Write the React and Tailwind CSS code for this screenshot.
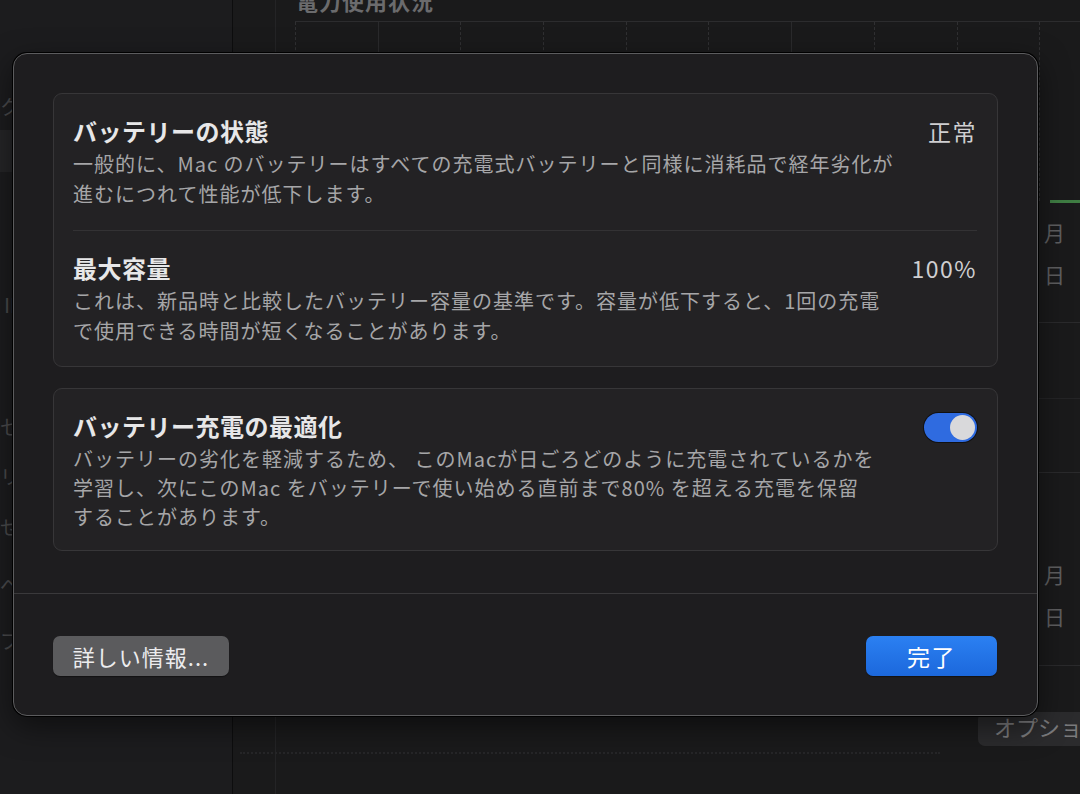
import React from 'react';

const gridCols = [0, 1, 2, 3, 4, 5, 6, 7, 8, 9];

const Toggle = () => (
  <div className="w-[53px] h-[29px] rounded-full bg-[#2f6be0] flex items-center justify-end px-[2px] shadow-[0_0_0_1px_rgba(0,0,0,0.5)]">
    <div className="w-[25px] h-[25px] rounded-full bg-[#d9d9db]"></div>
  </div>
);

const Item = ({ title, value, lines, leading, right }) => (
  <div className="flex justify-between items-start">
    <div>
      <div className="text-[24px] leading-[30px] font-semibold text-[#e7e7e8] tracking-[0.5px]">{title}</div>
      <div className={`mt-[3px] text-[20px] ${leading} text-[#a6a6a8] tracking-[1px]`}>
        {lines.map((l, i) => (
          <div key={i} className="whitespace-nowrap">{l}</div>
        ))}
      </div>
    </div>
    {value && (
      <div className="text-[23px] leading-[30px] text-[#cfcfd1] tracking-[1.5px]">{value}</div>
    )}
    {right}
  </div>
);

const App = () => {
  return (
    <div className="relative w-[1080px] h-[794px] overflow-hidden bg-[#1a1a1b] font-['Noto_Sans_CJK_JP','Noto_Sans',sans-serif] flex">
      {/* Background window: sidebar */}
      <div className="w-[233px] shrink-0 h-full bg-[#1c1c1e] border-r border-[#0d0d0e] flex flex-col text-[#4a4a4c] text-[20px]">
        <div className="mt-[92px]">ク</div>
        <div className="mt-[8px] h-[42px] bg-[#252527]"></div>
        <div className="mt-[118px]">Ⅱ</div>
        <div className="mt-[92px]">セ</div>
        <div className="mt-[20px]">リ</div>
        <div className="mt-[20px]">せ</div>
        <div className="mt-[28px]">ベ</div>
        <div className="mt-[26px]">ブ</div>
      </div>

      {/* Background window: content */}
      <div className="flex-1 min-w-0 h-full flex overflow-hidden">
        <div className="w-[43px] shrink-0 border-r border-[#242426]"></div>
        <div className="flex-1 min-w-0 relative">
          <div className="absolute -top-[16px] left-[20px] text-[22px] font-semibold text-[#6b6b6d] tracking-[1px] whitespace-nowrap">電力使用状況</div>
          <div className="mt-[21px] ml-[19px] h-[180px] border-t border-[#2c2c2e] flex">
            {gridCols.map((c) => (
              <div
                key={c}
                className={`w-[82.7px] shrink-0 border-l ${c % 5 === 1 ? 'border-solid border-[#2a2a2c]' : 'border-dashed border-[#303032]'}`}
              ></div>
            ))}
          </div>
          {/* right edge bits visible beside the dialog */}
          <div className="absolute left-[774px] top-[200px] w-[40px] h-[3px] bg-[#3f7d43]"></div>
          <div className="absolute left-[768px] top-[218px] text-[21px] leading-[28px] text-[#5e5e60] flex flex-col gap-[14px]">
            <div>月</div>
            <div>日</div>
          </div>
          <div className="absolute left-[760px] top-[322px] w-[100px] border-t border-[#2a2a2c]"></div>
          <div className="absolute left-[760px] top-[398px] w-[100px] border-t border-[#242426]"></div>
          <div className="absolute left-[760px] top-[472px] w-[100px] border-t border-[#2a2a2c]"></div>
          <div className="absolute left-[768px] top-[560px] text-[21px] leading-[28px] text-[#5e5e60] flex flex-col gap-[14px]">
            <div>月</div>
            <div>日</div>
          </div>
          <div className="absolute left-[760px] top-[665px] w-[100px] border-t border-[#2a2a2c]"></div>
          <div className="absolute left-[-36px] top-[752px] w-[700px] border-t-2 border-dotted border-[#262628]"></div>
          <div className="absolute left-[702px] top-[712px] w-[140px] h-[34px] rounded-[7px] bg-[#2b2b2d] text-[22px] leading-[28px] pl-[16px] text-[#7a7a7c] whitespace-nowrap">オプション</div>
        </div>
      </div>

      {/* Modal sheet */}
      <div className="absolute left-[13px] top-[53px] w-[1025px] h-[663px] rounded-[14px] bg-[#1e1d1f] border border-[#5c5c5e] shadow-[0_0_0_1px_#000,0_10px_30px_rgba(0,0,0,0.5)] flex flex-col">
        <div className="px-[39px] pt-[39px] flex flex-col gap-[21px]">
          <div className="rounded-[9px] bg-[#232224] border border-[#373638] pl-[19px] pr-[20px] pt-[22px] pb-[20px]">
            <Item
              title="バッテリーの状態"
              value="正常"
              leading="leading-[30px]"
              lines={[
                '一般的に、Mac のバッテリーはすべての充電式バッテリーと同様に消耗品で経年劣化が',
                '進むにつれて性能が低下します。',
              ]}
            />
            <div className="mt-[21px] mb-[22px] border-t border-[#333234]"></div>
            <Item
              title="最大容量"
              value="100%"
              leading="leading-[30px]"
              lines={[
                'これは、新品時と比較したバッテリー容量の基準です。容量が低下すると、1回の充電',
                'で使用できる時間が短くなることがあります。',
              ]}
            />
          </div>

          <div className="rounded-[9px] bg-[#232224] border border-[#373638] pl-[19px] pr-[20px] pt-[22px] pb-[19px]">
            <Item
              title="バッテリー充電の最適化"
              leading="leading-[29px]"
              lines={[
                'バッテリーの劣化を軽減するため、 このMacが日ごろどのように充電されているかを',
                '学習し、次にこのMac をバッテリーで使い始める直前まで80% を超える充電を保留',
                'することがあります。',
              ]}
              right={
                <div className="mt-[2px]">
                  <Toggle />
                </div>
              }
            />
          </div>
        </div>

        <div className="mt-[42px] border-t border-[#3a393b]"></div>

        <div className="pl-[39px] pr-[40px] pt-[42px] flex justify-between">
          <button className="w-[176px] h-[40px] rounded-[7px] bg-[#5b5b5d] text-[#ececee] text-[22px] tracking-[1px] shadow-[0_1px_1px_rgba(0,0,0,0.4)]">
            詳しい情報...
          </button>
          <button className="w-[131px] h-[40px] rounded-[7px] bg-gradient-to-b from-[#2b80f2] to-[#1c68dc] text-white text-[23px] tracking-[1.5px] shadow-[0_1px_1px_rgba(0,0,0,0.4)]">
            完了
          </button>
        </div>
      </div>
    </div>
  );
};

export default App;
